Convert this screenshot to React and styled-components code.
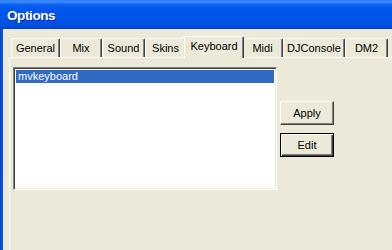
import React, { useState } from 'react'
import styled, { createGlobalStyle } from 'styled-components'

const Global = createGlobalStyle`
  html, body {
    margin: 0;
    padding: 0;
    background: #ECE9D8;
  }
  body {
    font-family: Tahoma, "Liberation Sans", Arial, sans-serif;
    font-size: 11px;
  }
`;

const Window = styled.div`
  width: 392px;
  height: 250px;
  display: flex;
  flex-direction: column;
  overflow: hidden;
`;

const TitleBar = styled.div`
  height: 29px;
  flex: none;
  display: flex;
  align-items: center;
  padding-left: 7px;
  padding-top: 1px;
  box-sizing: border-box;
  background: linear-gradient(to bottom,
    #2D7BFF 0px, #3D8EFF 2px, #1467F5 4px, #0058EE 7px,
    #0055E8 16px, #0052E2 24px, #0049D6 27px, #0040C8 29px);
  color: #fff;
  font-family: "Liberation Sans", Arial, sans-serif;
  font-weight: bold;
  font-size: 13.5px;
  letter-spacing: -0.4px;
  text-shadow: 1px 1px 0 #0A2DA0;
`;

const Body = styled.div`
  flex: 1;
  display: flex;
  flex-direction: column;
  border-left: 3px solid #0553E6;
  background: #ECE9D8;
  padding: 7px 0 0 6px;
  position: relative;
  &::before {
    content: '';
    position: absolute;
    left: -3px;
    top: 0;
    bottom: 0;
    width: 1px;
    background: #0A3DD0;
  }
`;

const TabStrip = styled.div`
  display: flex;
  align-items: flex-end;
  height: 21px;
  margin-left: 2px;
`;

const Tab = styled.div`
  box-sizing: border-box;
  flex: none;
  width: ${p => p.$w}px;
  height: 19px;
  display: flex;
  align-items: center;
  justify-content: center;
  padding-bottom: 1px;
  color: #000;
  background: #ECE9D8;
  border-top: 1px solid #fff;
  border-left: 1px solid #fff;
  border-right: 1px solid #404040;
  box-shadow: inset -1px 0 0 #808080;
  border-top-left-radius: 2px;
  border-top-right-radius: 2px;
  position: relative;
  z-index: 1;
  ${p => p.$active && `
    z-index: 2;
    height: 22px;
    margin: 0 -2px -1px -2px;
    padding-bottom: 4px;
  `}
`;

const Panel = styled.div`
  flex: 1;
  display: flex;
  align-items: flex-start;
  border-top: 1px solid #fff;
  border-left: 1px solid #fff;
  padding: 9px 0 0 3px;
  background: #ECE9D8;
`;

const ListBox = styled.div`
  box-sizing: border-box;
  width: 264px;
  height: 123px;
  background: #fff;
  border-top: 1px solid #808080;
  border-left: 1px solid #808080;
  border-right: 1px solid #fff;
  border-bottom: 1px solid #fff;
  box-shadow: inset 1px 1px 0 #404040, inset -1px -1px 0 #ECE9D8;
  padding: 2px 2px;
`;

const ListItem = styled.div`
  height: 13px;
  line-height: 13px;
  padding-left: 2px;
  color: ${p => (p.$selected ? '#fff' : '#000')};
  background: ${p => (p.$selected ? '#316AC5' : 'transparent')};
  font-family: "Liberation Sans", Arial, sans-serif;
  font-size: 11px;
`;

const ButtonColumn = styled.div`
  display: flex;
  flex-direction: column;
  gap: 8px;
  margin: 34px 0 0 3px;
`;

const Button = styled.div`
  box-sizing: border-box;
  width: 54px;
  height: 24px;
  display: flex;
  align-items: center;
  justify-content: center;
  font-family: "Liberation Sans", Arial, sans-serif;
  font-size: 11px;
  color: #000;
  background: #ECE9D8;
  border: 1px solid;
  border-color: #fff #404040 #404040 #fff;
  box-shadow: inset -1px -1px 0 #808080;
  ${p => p.$default && `
    border-color: #000;
    box-shadow: inset 1px 1px 0 #fff, inset -1px -1px 0 #404040, inset -2px -2px 0 #808080;
  `}
`;

const tabs = [
  ['General', 49], ['Mix', 42], ['Sound', 43], ['Skins', 41],
  ['Keyboard', 60], ['Midi', 41], ['DJConsole', 62], ['DM2', 43],
];

export default function App() {
  const [active, setActive] = useState('Keyboard')
  return (
    <Window>
      <Global />
      <TitleBar>Options</TitleBar>
      <Body>
        <TabStrip>
          {tabs.map(([name, w]) => (
            <Tab key={name} $w={w} $active={name === active} onClick={() => setActive(name)}>
              {name}
            </Tab>
          ))}
        </TabStrip>
        <Panel>
          <ListBox>
            <ListItem $selected>mvkeyboard</ListItem>
          </ListBox>
          <ButtonColumn>
            <Button>Apply</Button>
            <Button $default>Edit</Button>
          </ButtonColumn>
        </Panel>
      </Body>
    </Window>
  )
}
